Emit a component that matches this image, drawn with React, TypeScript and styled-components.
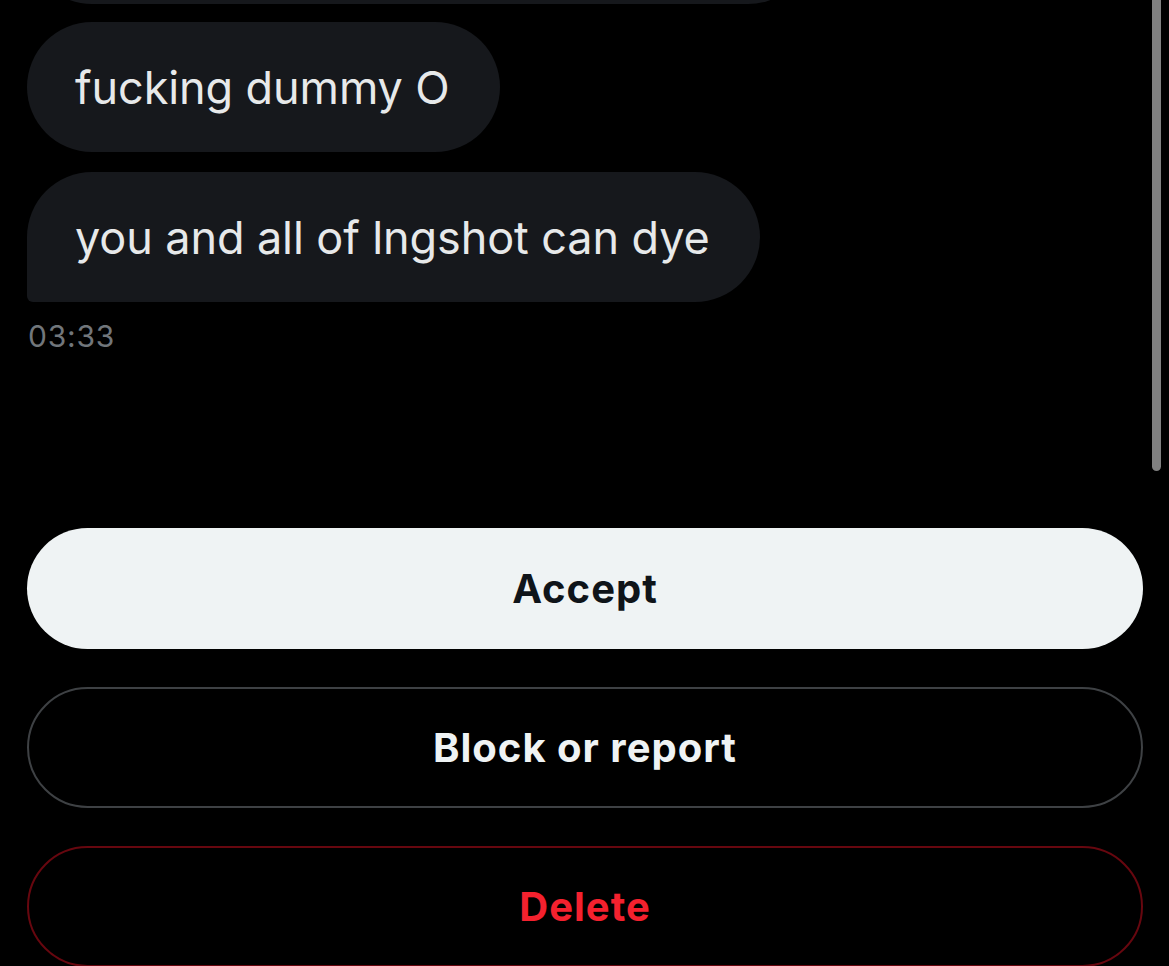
import React from "react";
import styled, { createGlobalStyle } from "styled-components";

const Global = createGlobalStyle`
  html, body {
    margin: 0;
    padding: 0;
    background: #000000;
  }
  * { box-sizing: border-box; }
`;

const Screen = styled.div`
  position: relative;
  width: 1169px;
  height: 966px;
  overflow: hidden;
  background: #000000;
  font-family: Inter, "Noto Sans", sans-serif;
  display: flex;
  flex-direction: column;
`;

const Thread = styled.div`
  display: flex;
  flex-direction: column;
  align-items: flex-start;
  padding: 0 27px;
`;

const Bubble = styled.div<{ $sharpBottomLeft?: boolean }>`
  display: flex;
  align-items: center;
  height: 130px;
  padding: 0 50px 0 48px;
  background: #16181c;
  color: #e7e9ea;
  font-size: 45px;
  letter-spacing: -0.1px;
  border-radius: 65px;
  border-bottom-left-radius: ${(p) => (p.$sharpBottomLeft ? "6px" : "65px")};
  margin-bottom: 20px;
  white-space: nowrap;
`;

const PartialBubble = styled.div`
  width: 786px;
  height: 130px;
  margin: -126px 0 18px 0;
  border-radius: 65px;
  background: #16181c;
`;

const Timestamp = styled.div`
  margin-top: -4px;
  padding-left: 1px;
  color: #71767b;
  font-size: 30px;
  line-height: 36px;
  letter-spacing: 0.8px;
`;

const Actions = styled.div`
  margin-top: 174px;
  padding: 0 26px 0 27px;
  display: flex;
  flex-direction: column;
  gap: 38px;
`;

const ActionButton = styled.button<{ $variant: "primary" | "outline" | "danger" }>`
  height: 121px;
  width: 100%;
  border-radius: 61px;
  font-family: Inter, "Noto Sans", sans-serif;
  font-weight: 700;
  font-size: 40px;
  letter-spacing: 1px;
  display: flex;
  align-items: center;
  justify-content: center;
  padding: 0;
  cursor: pointer;
  background: ${(p) => (p.$variant === "primary" ? "#eff3f4" : "#000000")};
  color: ${(p) =>
    p.$variant === "primary" ? "#0f1419" : p.$variant === "danger" ? "#f4212e" : "#eff3f4"};
  border: ${(p) =>
    p.$variant === "primary"
      ? "none"
      : p.$variant === "danger"
      ? "2px solid #67070f"
      : "2px solid #3e4144"};
`;

const Scrollbar = styled.div`
  position: absolute;
  top: 0;
  left: 1152px;
  width: 9px;
  height: 471px;
  border-radius: 0 0 5px 5px;
  background: #808080;
`;

export default function App() {
  return (
    <>
      <Global />
      <Screen>
        <Thread>
          <PartialBubble />
          <Bubble>fucking dummy O</Bubble>
          <Bubble $sharpBottomLeft>you and all of lngshot can dye</Bubble>
          <Timestamp>03:33</Timestamp>
        </Thread>
        <Actions>
          <ActionButton $variant="primary">Accept</ActionButton>
          <ActionButton $variant="outline">Block or report</ActionButton>
          <ActionButton $variant="danger">Delete</ActionButton>
        </Actions>
        <Scrollbar />
      </Screen>
    </>
  );
}
